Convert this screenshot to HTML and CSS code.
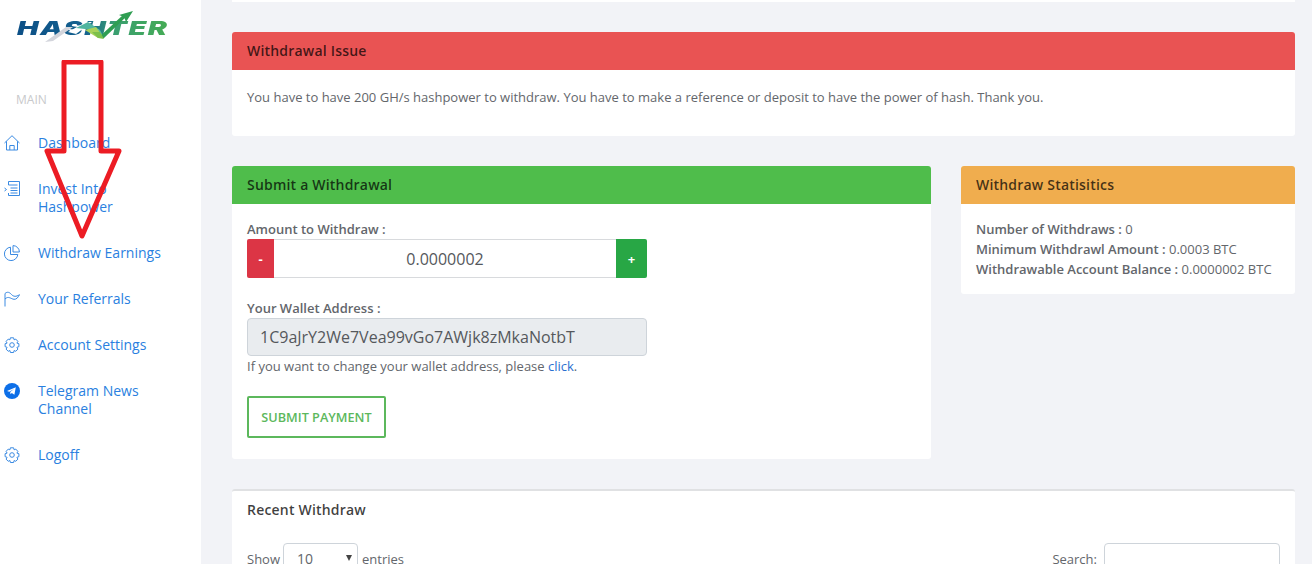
FILE: index.html
```html
<!DOCTYPE html>
<html lang="en">
<head>
<meta charset="utf-8">
<title>Hashter - Withdraw</title>
<link rel="stylesheet" href="styles.css">
</head>
<body>
<div class="layout">
  <aside class="sidebar">
    <div class="logo">
      <span class="logo-text">HASHTER</span>
      <svg class="logo-mark" width="100" height="36" viewBox="0 0 100 36">
        <path d="M5 34 L26 19 L33 19 L13 33Z" fill="#d3d5dc"/>
        <path d="M28 24 L46 14 L52 14 L36 26Z" fill="#fff"/>
        <path d="M36 20 L48 14 L60 22 L64 30 L54 22Z" fill="#4fb5a0"/>
        <path d="M45 22 L56 19 L64 30 L58 30Z" fill="#a9d25a"/>
        <path d="M58 30 L64 30 L86 9 L83 7Z" fill="#2f9e52"/>
        <path d="M64 31 L58 30 L52 24 L60 24Z" fill="#7cc04a"/>
        <path d="M79 7 L93 3 L86 14 L84 9Z" fill="#2f9e52"/>
      </svg>
    </div>
    <div class="nav-label">MAIN</div>
    <nav class="nav">
      <a class="nav-item" href="#">
        <svg class="nav-icon" viewBox="0 0 16 16"><path d="M.5 8 8 .7 15.500 8M2.500 6.300V15h11V6.300M5.800 15v-4.500h4.400V15"/></svg>
        <span>Dashboard</span>
      </a>
      <a class="nav-item" href="#">
        <svg class="nav-icon" viewBox="0 0 16 16"><path d="M4.500 4V.5h11v14h-11V12M4.500 4h9M6.500 7h7M6.500 9.500h7M6.500 12h7M.5 7l2 1.500-2 1.500"/></svg>
        <span>Invest Into<br>Hashpower</span>
      </a>
      <a class="nav-item" href="#">
        <svg class="nav-icon" viewBox="0 0 16 16"><path d="M6.500 2.200a6.700 6.700 0 1 0 7.300 7.300H6.500Z"/><path d="M9 .6a6.400 6.400 0 0 1 6.400 6.400H9Z"/></svg>
        <span>Withdraw Earnings</span>
      </a>
      <a class="nav-item" href="#">
        <svg class="nav-icon" viewBox="0 0 16 16"><path d="M1 15.500V2.500C3.500.3 5.500 1.300 7.500 3.500s4.500 2.500 8 .2C14 6.500 12.500 8.500 10 8.300 7 8 4.500 4.500 1 8"/></svg>
        <span>Your Referrals</span>
      </a>
      <a class="nav-item" href="#">
        <svg class="nav-icon" viewBox="0 0 16 16"><use href="#gear"/></svg>
        <span>Account Settings</span>
      </a>
      <a class="nav-item" href="#">
        <svg class="nav-icon solid" viewBox="0 0 16 16"><circle cx="8" cy="8" r="8" fill="#0d6fe8"/><path d="M3 7.900 11.800 4.300 10.400 11.800 7.800 10 6.500 11.300 6.200 9.100 10 5.900 5.300 8.700Z" fill="#fff"/></svg>
        <span>Telegram News<br>Channel</span>
      </a>
      <a class="nav-item" href="#">
        <svg class="nav-icon" viewBox="0 0 16 16"><use href="#gear"/></svg>
        <span>Logoff</span>
      </a>
    </nav>
    <svg class="defs" width="0" height="0">
      <defs>
        <g id="gear">
          <circle cx="8" cy="8" r="2.300"/>
          <path d="M6.400.8h3.200l.5 2 1.700-.7 2.100 2.300-1 1.700 2 .6v3l-2 .6 1 1.800-2.100 2.200-1.700-.8-.5 2H6.400l-.5-2-1.700.8-2.100-2.200 1-1.800-2-.6v-3l2-.6-1-1.700 2.100-2.300 1.700.7Z"/>
        </g>
      </defs>
    </svg>
  </aside>

  <main class="main">
    <div class="card-stub"></div>

    <section class="card alert-card">
      <h2 class="card-head head-red">Withdrawal Issue</h2>
      <p class="alert-text">You have to have 200 GH/s hashpower to withdraw. You have to make a reference or deposit to have the power of hash. Thank you.</p>
    </section>

    <div class="columns">
      <section class="card form-card">
        <h2 class="card-head head-green">Submit a Withdrawal</h2>
        <div class="form-body">
          <label class="field-label">Amount to Withdraw :</label>
          <div class="stepper">
            <button class="step step-minus" type="button">-</button>
            <div class="step-value">0.0000002</div>
            <button class="step step-plus" type="button">+</button>
          </div>
          <label class="field-label wallet-label">Your Wallet Address :</label>
          <div class="wallet-input">1C9aJrY2We7Vea99vGo7AWjk8zMkaNotbT</div>
          <p class="hint">If you want to change your wallet address, please <a href="#">click</a>.</p>
          <button class="submit" type="button">SUBMIT PAYMENT</button>
        </div>
      </section>

      <section class="card stats-card">
        <h2 class="card-head head-orange">Withdraw Statisitics</h2>
        <div class="stats-body">
          <div><b>Number of Withdraws :</b> 0</div>
          <div><b>Minimum Withdrawl Amount :</b> 0.0003 BTC</div>
          <div><b>Withdrawable Account Balance :</b> 0.0000002 BTC</div>
        </div>
      </section>
    </div>

    <section class="card recent-card">
      <h2 class="recent-title">Recent Withdraw</h2>
      <div class="table-controls">
        <div class="control">Show <span class="select">10<i class="caret"></i></span> entries</div>
        <div class="control">Search: <span class="search"></span></div>
      </div>
    </section>
  </main>
</div>

<svg class="red-arrow" width="84" height="184" viewBox="0 0 84 184">
  <path d="M23 2H60V91H78L41 176 6 91H23Z"/>
</svg>
</body>
</html>
```
FILE: styles.css
```css
* { box-sizing: border-box; }
html, body { height: 100%; margin: 0; overflow: hidden; }
body {
  font-family: "Open Sans", "Liberation Sans", sans-serif;
  font-size: 13px;
  color: #63666b;
  background: #f2f3f7;
}
.layout { display: flex; height: 564px; overflow: hidden; }

.sidebar {
  flex: 0 0 201px;
  background: #fff;
}
.logo {
  position: relative;
  height: 91px;
  padding: 17px 0 0 17px;
}
.logo-text {
  display: block;
  font-family: Inter, "Liberation Sans", sans-serif;
  font-size: 19px;
  line-height: 24px;
  font-weight: 900;
  font-style: italic;
  letter-spacing: 1px;
  width: 100px;
  background: linear-gradient(90deg, #0c4f86 0%, #14618f 45%, #3a9f70 65%, #45ab55 100%);
  -webkit-background-clip: text;
  background-clip: text;
  color: transparent;
  transform: scaleX(1.51);
  transform-origin: left center;
}
.logo-mark { position: absolute; left: 40px; top: 8px; }
.nav-label {
  padding-left: 16px;
  height: 29px;
  line-height: 18px;
  font-size: 12px;
  color: #c8c9cb;
}
.nav { display: flex; flex-direction: column; }
.nav-item {
  display: flex;
  align-items: flex-start;
  padding: 14px 0 14px 4px;
  font-size: 14px;
  line-height: 18px;
  color: #2a7fe0;
  text-decoration: none;
}
.nav-icon {
  flex: 0 0 16px;
  width: 16px;
  height: 16px;
  margin: 1px 18px 0 0;
  fill: none;
  stroke: #3a8ae2;
  stroke-width: 1;
}
.nav-icon.solid { stroke: none; }
.defs { position: absolute; }

.main {
  flex: 1;
  min-width: 0;
  padding: 0 17px 0 31px;
}
.card-stub {
  height: 2px;
  background: #fff;
  margin-bottom: 30px;
}
.card { background: #fff; border-radius: 3px; }
.card-head {
  margin: 0;
  height: 38px;
  padding: 0 15px;
  line-height: 38px;
  font-size: 14px;
  font-weight: 600;
  letter-spacing: .2px;
  color: rgba(0, 0, 0, .72);
  border-radius: 3px 3px 0 0;
}
.head-red { background: #e95353; }
.head-green { background: #4fbd4b; }
.head-orange { background: #f0ad4e; }

.alert-card { height: 104px; margin-bottom: 30px; }
.alert-text { margin: 0; padding: 18px 15px; line-height: 18px; }

.columns { display: flex; align-items: flex-start; gap: 30px; margin-bottom: 30px; }
.form-card { flex: 0 0 699px; height: 293px; }
.stats-card { flex: 1; height: 128px; }

.form-body { padding: 16px 15px 0; }
.field-label {
  display: block;
  height: 19px;
  line-height: 18px;
  font-weight: 600;
}
.stepper {
  display: flex;
  width: 400px;
  height: 39px;
}
.step {
  border: 0;
  padding: 0;
  color: #fff;
  font-family: inherit;
  font-size: 13px;
  font-weight: 700;
  border-radius: 2px 0 0 2px;
}
.step-minus { flex: 0 0 27px; background: #dc3545; }
.step-plus { flex: 0 0 31px; background: #28a745; border-radius: 0 2px 2px 0; }
.step-value {
  flex: 1;
  text-align: center;
  border: 1px solid #d8dadd;
  border-width: 1px 0;
  font-size: 16px;
  line-height: 39px;
  color: #55585c;
}
.wallet-label { margin-top: 21px; }
.wallet-input {
  width: 400px;
  height: 38px;
  padding-left: 12px;
  background: #e9ecef;
  border: 1px solid #ced4da;
  border-radius: 4px;
  font-size: 16px;
  line-height: 36px;
  color: #55585c;
}
.hint { margin: 1px 0 0; height: 39px; line-height: 18px; }
.hint a { color: #2a6fd0; text-decoration: none; }
.submit {
  display: block;
  width: 139px;
  height: 42px;
  padding: 0;
  background: #fff;
  border: 2px solid #5cb85c;
  border-radius: 2px;
  color: #5cb85c;
  font-family: inherit;
  font-size: 12.700px;
  font-weight: 600;
}

.stats-body { padding: 15px 15px; line-height: 20px; }
.stats-body b { font-weight: 600; }

.recent-card {
  height: 120px;
  border-top: 2px solid #e0e1e3;
  padding: 0 15px;
}
.recent-title {
  margin: 0;
  padding-top: 9px;
  height: 52px;
  line-height: 20px;
  font-size: 14px;
  font-weight: 600;
  letter-spacing: .2px;
  color: rgba(0, 0, 0, .76);
}
.table-controls { display: flex; justify-content: space-between; }
.control { display: flex; align-items: flex-start; gap: 3px; line-height: 32px; }
.select {
  position: relative;
  display: block;
  width: 75px;
  height: 38px;
  margin-right: 1px;
  padding-left: 13px;
  border: 1px solid #ced4da;
  border-radius: 4px;
  font-size: 14px;
  line-height: 30px;
}
.caret {
  position: absolute;
  right: 5px;
  top: 11px;
  border: 3.500px solid transparent;
  border-top: 6px solid #444;
  border-bottom: 0;
}
.search {
  display: block;
  width: 176px;
  height: 38px;
  margin-left: 4px;
  border: 1px solid #ced4da;
  border-radius: 4px;
}

.red-arrow {
  position: absolute;
  left: 41px;
  top: 60px;
  fill: none;
  stroke: #ec1c24;
  stroke-width: 5;
  stroke-linejoin: round;
}
```
